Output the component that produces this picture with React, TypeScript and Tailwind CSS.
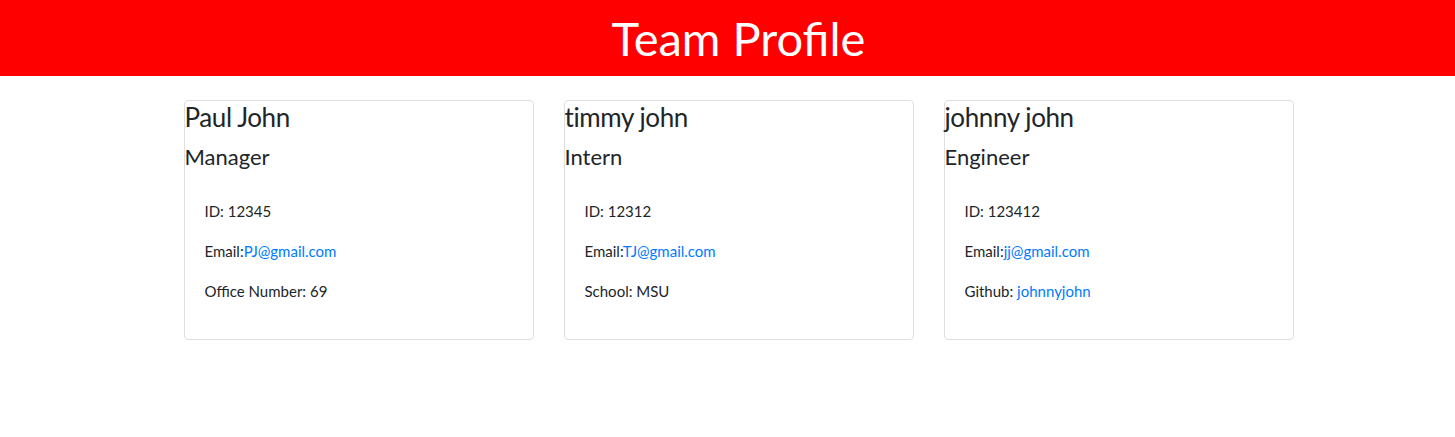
import React from "react";

interface Member {
  name: string;
  role: string;
  id: string;
  email: string;
  extraLabel: string;
  extraValue: string;
  extraLink?: boolean;
}

const team: Member[] = [
  { name: "Paul John", role: "Manager", id: "12345", email: "PJ@gmail.com", extraLabel: "Office Number:", extraValue: "69" },
  { name: "timmy john", role: "Intern", id: "12312", email: "TJ@gmail.com", extraLabel: "School:", extraValue: "MSU" },
  { name: "johnny john", role: "Engineer", id: "123412", email: "jj@gmail.com", extraLabel: "Github:", extraValue: "johnnyjohn", extraLink: true },
];

function Card({ m }: { m: Member }) {
  return (
    <div className="w-[350px] h-[240px] border border-[#dfdfdf] rounded-[4px] bg-white">
      <h3 className="text-[26px] leading-[33.6px] tracking-[-0.4px] mb-2">{m.name}</h3>
      <h4 className="text-[22px] leading-[28.8px] mb-2">{m.role}</h4>
      <div className="px-5 pt-5 text-[15px] leading-6">
        <p className="mb-4">ID: {m.id}</p>
        <p className="mb-4">
          Email:<a className="text-[#007bff]">{m.email}</a>
        </p>
        <p className="mb-4">
          {m.extraLabel}{" "}
          {m.extraLink ? <a className="text-[#007bff]">{m.extraValue}</a> : m.extraValue}
        </p>
      </div>
    </div>
  );
}

export default function App() {
  return (
    <div className="min-h-[437px] bg-white text-[#212529] font-['Lato',sans-serif]">
      <header className="h-[76px] bg-[#ff0000] flex items-center justify-center pl-[22px]">
        <h1 className="text-white text-[47px] leading-none">Team Profile</h1>
      </header>
      <main className="mt-6 flex justify-center gap-[30px] pl-[22px]">
        {team.map((m) => (
          <Card key={m.name} m={m} />
        ))}
      </main>
    </div>
  );
}
